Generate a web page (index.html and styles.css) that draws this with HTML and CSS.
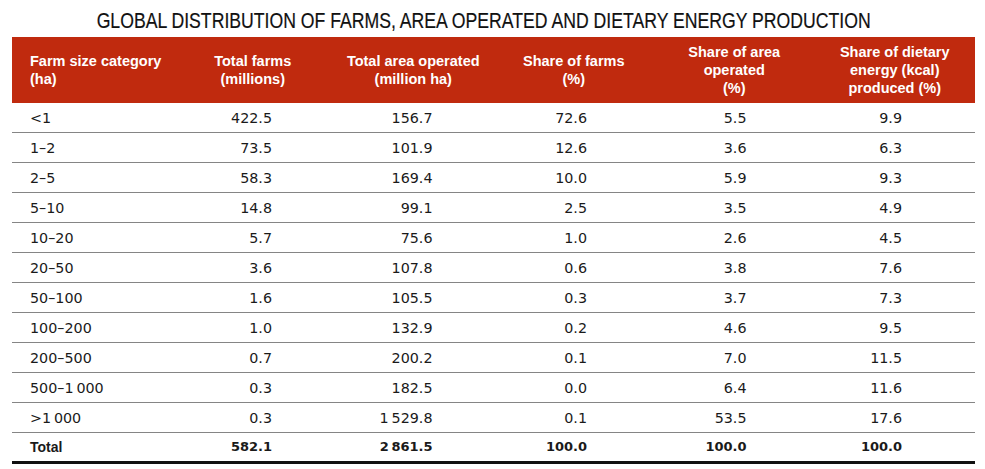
FILE: index.html
```html
<!DOCTYPE html>
<html lang="en">
<head>
<meta charset="utf-8">
<title>Global distribution of farms</title>
<link rel="stylesheet" href="styles.css">
</head>
<body>
<div class="page">
  <div class="title-wrap">
    <h1 class="title">GLOBAL DISTRIBUTION OF FARMS, AREA OPERATED AND DIETARY ENERGY PRODUCTION</h1>
  </div>
  <table class="farms">
    <thead>
      <tr>
        <th>Farm size category<br>(ha)</th>
        <th>Total farms<br>(millions)</th>
        <th>Total area operated<br>(million ha)</th>
        <th>Share of farms<br>(%)</th>
        <th>Share of area<br>operated<br>(%)</th>
        <th>Share of dietary<br>energy (kcal)<br>produced (%)</th>
      </tr>
    </thead>
    <tbody>
      <tr><td>&lt;1</td><td>422.5</td><td>156.7</td><td>72.6</td><td>5.5</td><td>9.9</td></tr>
      <tr><td>1–2</td><td>73.5</td><td>101.9</td><td>12.6</td><td>3.6</td><td>6.3</td></tr>
      <tr><td>2–5</td><td>58.3</td><td>169.4</td><td>10.0</td><td>5.9</td><td>9.3</td></tr>
      <tr><td>5–10</td><td>14.8</td><td>99.1</td><td>2.5</td><td>3.5</td><td>4.9</td></tr>
      <tr><td>10–20</td><td>5.7</td><td>75.6</td><td>1.0</td><td>2.6</td><td>4.5</td></tr>
      <tr><td>20–50</td><td>3.6</td><td>107.8</td><td>0.6</td><td>3.8</td><td>7.6</td></tr>
      <tr><td>50–100</td><td>1.6</td><td>105.5</td><td>0.3</td><td>3.7</td><td>7.3</td></tr>
      <tr><td>100–200</td><td>1.0</td><td>132.9</td><td>0.2</td><td>4.6</td><td>9.5</td></tr>
      <tr><td>200–500</td><td>0.7</td><td>200.2</td><td>0.1</td><td>7.0</td><td>11.5</td></tr>
      <tr><td>500–1&#8201;000</td><td>0.3</td><td>182.5</td><td>0.0</td><td>6.4</td><td>11.6</td></tr>
      <tr><td>&gt;1&#8201;000</td><td>0.3</td><td>1&#8201;529.8</td><td>0.1</td><td>53.5</td><td>17.6</td></tr>
      <tr class="total"><td>Total</td><td>582.1</td><td>2&#8201;861.5</td><td>100.0</td><td>100.0</td><td>100.0</td></tr>
    </tbody>
  </table>
</div>
</body>
</html>
```
FILE: styles.css
```css
html, body {
  margin: 0;
  padding: 0;
  background: #ffffff;
}

.page {
  padding: 8px 10px 0 12px;
}

.title-wrap {
  display: flex;
  justify-content: center;
  padding-right: 20px;
  margin-bottom: 3px;
}

.title {
  margin: 0;
  white-space: nowrap;
  font-family: "Liberation Sans", Arial, sans-serif;
  font-weight: normal;
  font-size: 22.5px;
  line-height: 26px;
  color: #111111;
  transform: scaleX(0.784);
  transform-origin: center;
  -webkit-text-stroke: 0.2px #111111;
}

.farms {
  width: 963px;
  border-collapse: collapse;
  table-layout: fixed;
  font-family: "DejaVu Sans", sans-serif;
  font-size: 14.3px;
  color: #1a1a1a;
}

.farms thead th {
  background: #c02a0e;
  color: #ffffff;
  font-family: "Liberation Sans", Arial, sans-serif;
  font-weight: bold;
  font-size: 14.5px;
  line-height: 18px;
  height: 66px;
  padding: 0;
  text-align: center;
  vertical-align: middle;
}

.farms thead th:first-child {
  text-align: left;
  padding-left: 18px;
}

.farms td {
  height: 29px;
  padding: 0;
  border-bottom: 1px solid #858585;
  text-align: right;
  vertical-align: middle;
  line-height: 18px;
}

.farms td:first-child {
  text-align: left;
  padding-left: 18px;
}

.farms td:nth-child(2),
.farms td:nth-child(3) {
  padding-right: 61px;
}

.farms td:nth-child(4) {
  padding-right: 67px;
}

.farms td:nth-child(5) {
  padding-right: 68px;
}

.farms td:nth-child(6) {
  padding-right: 73px;
}

.farms .total td {
  font-family: "DejaVu Sans", sans-serif;
  font-weight: bold;
  font-size: 13px;
  border-bottom: 3px solid #111111;
  height: 28px;
}

.farms .total td:first-child {
  font-family: "Liberation Sans", Arial, sans-serif;
  font-size: 14px;
}
```
